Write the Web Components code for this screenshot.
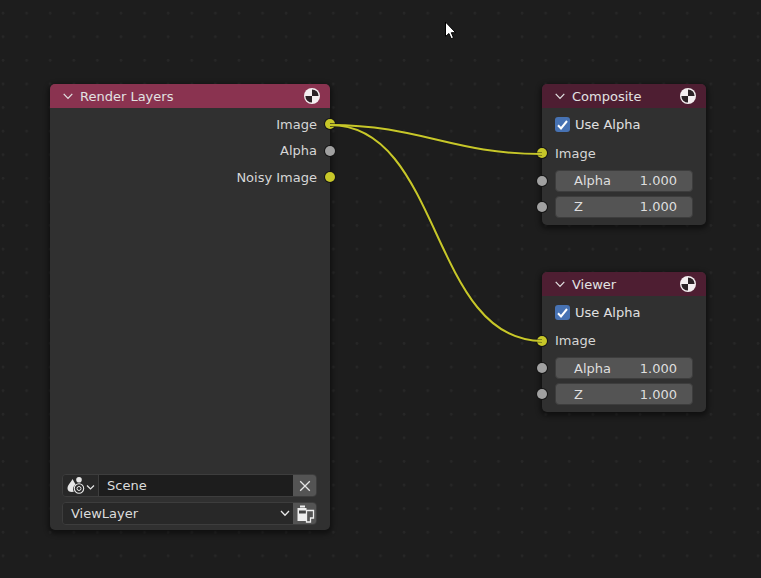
<!DOCTYPE html>
<html>
<head>
<meta charset="utf-8">
<title>Compositor nodes</title>
<style>
  html, body { margin: 0; height: 100%; background: #1d1d1d; }
</style>
</head>
<body>

<node-canvas>
  <node-frame title="Render Layers" color="#8a3350" style="left:50px;top:84px;width:280px;height:446px">
    <node-socket side="out" color="#c7c729" label="Image"></node-socket>
    <node-socket side="out" color="#a1a1a1" label="Alpha"></node-socket>
    <node-socket side="out" color="#c7c729" label="Noisy Image"></node-socket>
    <layer-picker slot="footer"></layer-picker>
  </node-frame>

  <node-frame title="Composite" color="#4e1e32" style="left:542px;top:84px;width:164px;height:141px">
    <node-check label="Use Alpha"></node-check>
    <node-socket side="in" color="#c7c729" label="Image" style="height:29px"></node-socket>
    <node-socket side="in" color="#a1a1a1" value-label="Alpha" value="1.000"></node-socket>
    <node-socket side="in" color="#a1a1a1" value-label="Z" value="1.000"></node-socket>
  </node-frame>

  <node-frame title="Viewer" color="#4e1e32" style="left:542px;top:272px;width:164px;height:140px">
    <node-check label="Use Alpha"></node-check>
    <node-socket side="in" color="#c7c729" label="Image" style="height:30px"></node-socket>
    <node-socket side="in" color="#a1a1a1" value-label="Alpha" value="1.000"></node-socket>
    <node-socket side="in" color="#a1a1a1" value-label="Z" value="1.000"></node-socket>
  </node-frame>
</node-canvas>

<script>
// preview sphere, same glyph in every node header
const PREVIEW_ICON = `
  <svg width="18" height="18" viewBox="0 0 18 18">
    <circle cx="9" cy="9" r="8" fill="#f4eef0"/>
    <path d="M9 9V2.4A6.6 6.6 0 0 1 15.6 9Z" fill="#2b2226"/>
    <path d="M9 9v6.6A6.6 6.6 0 0 1 2.4 9Z" fill="#2b2226"/>
  </svg>`;

class NodeCanvas extends HTMLElement {
  constructor() {
    super();
    this.attachShadow({ mode: 'open' });
    this.shadowRoot.innerHTML = `
      <style>
        :host {
          display: block;
          position: relative;
          width: 761px;
          height: 578px;
          overflow: hidden;
          background-color: #1d1d1d;
          background-image: radial-gradient(circle at 3px 13px, #272727 0, #272727 1.2px, transparent 1.7px);
          background-size: 23.6px 23.6px;
          font-family: "DejaVu Sans", sans-serif;
          font-size: 13px;
          color: #dcdcdc;
        }
        svg.wires { position: absolute; inset: 0; z-index: 2; pointer-events: none; }
        svg.cursor { position: absolute; left: 444px; top: 21px; z-index: 3; }
      </style>
      <slot></slot>
      <svg class="wires" width="761" height="578" fill="none">
        <path d="M330 125C420 125 452 154 542 154" stroke="#1a1a1a" stroke-opacity=".55" stroke-width="3.6"/>
        <path d="M330 125C442 125 430 341 542 341" stroke="#1a1a1a" stroke-opacity=".55" stroke-width="3.6"/>
        <path d="M330 125C420 125 452 154 542 154" stroke="#c7c729" stroke-width="2"/>
        <path d="M330 125C442 125 430 341 542 341" stroke="#c7c729" stroke-width="2"/>
      </svg>
      <svg class="cursor" width="14" height="20" viewBox="0 0 14 20">
        <path d="M1.5 1v14.5l3.4-3 2.3 5.2 2.3-1-2.2-5h4.4Z" fill="#fff" stroke="#000" stroke-width="1"/>
      </svg>`;
  }
}

class NodeFrame extends HTMLElement {
  constructor() {
    super();
    this.attachShadow({ mode: 'open' });
  }

  connectedCallback() {
    const color = this.getAttribute('color');
    this.shadowRoot.innerHTML = `
      <style>
        :host {
          position: absolute;
          display: flex;
          flex-direction: column;
          box-sizing: border-box;
          background: #303030;
          border-radius: 5px;
          box-shadow: 0 2px 5px 2px rgba(0, 0, 0, .45);
          z-index: 1;
        }
        .head {
          flex: none;
          height: 24px;
          display: flex;
          align-items: center;
          gap: 7px;
          padding: 0 9px 0 13px;
          background: ${color};
          border-radius: 5px 5px 0 0;
          color: #e2e2e2;
        }
        .head span { flex: 1; }
        .head svg { display: block; }
        .body {
          flex: 1;
          display: flex;
          flex-direction: column;
          padding-top: 3px;
          min-height: 0;
        }
        .foot { padding: 0 13px 5px 12px; }
      </style>
      <div class="head">
        <svg width="10" height="7" viewBox="0 0 10 7" fill="none" stroke="#e2e2e2" stroke-width="1.2"><path d="M.7.8 5 5.3 9.3.8"/></svg>
        <span>${this.getAttribute('title')}</span>
        ${PREVIEW_ICON}
      </div>
      <div class="body"><slot></slot></div>
      <div class="foot"><slot name="footer"></slot></div>`;
    this.removeAttribute('title');
  }
}

class NodeSocket extends HTMLElement {
  constructor() {
    super();
    this.attachShadow({ mode: 'open' });
  }

  connectedCallback() {
    const side = this.getAttribute('side');
    const field = this.getAttribute('value-label');
    const inner = field
      ? `<div class="field"><span>${field}</span><span>${this.getAttribute('value')}</span></div>`
      : `<span class="label">${this.getAttribute('label')}</span>`;
    this.shadowRoot.innerHTML = `
      <style>
        :host {
          display: flex;
          position: relative;
          align-items: center;
          box-sizing: border-box;
          height: 26.5px;
          padding: 0 13px;
          color: #d6d6d6;
          justify-content: ${side === 'out' ? 'flex-end' : 'flex-start'};
        }
        .dot {
          position: absolute;
          ${side === 'out' ? 'right' : 'left'}: -5px;
          top: 50%;
          width: 10px;
          height: 10px;
          margin-top: -5px;
          border-radius: 50%;
          background: ${this.getAttribute('color')};
          box-shadow: 0 0 0 1px #151515;
          z-index: 3;
        }
        .field {
          flex: 1;
          height: 22px;
          display: flex;
          align-items: center;
          justify-content: space-between;
          padding: 0 15px 0 18px;
          background: #545454;
          border: 1px solid #3d3d3d;
          border-radius: 4px;
          box-sizing: border-box;
          color: #dedede;
        }
      </style>
      ${inner}
      <span class="dot"></span>`;
  }
}

class NodeCheck extends HTMLElement {
  constructor() {
    super();
    this.attachShadow({ mode: 'open' });
  }

  connectedCallback() {
    this.shadowRoot.innerHTML = `
      <style>
        :host {
          display: flex;
          align-items: center;
          gap: 5px;
          height: 28px;
          padding: 0 13px;
          color: #e0e0e0;
        }
        .box {
          width: 15px;
          height: 15px;
          border-radius: 3px;
          background: #4772b3;
          display: flex;
          align-items: center;
          justify-content: center;
        }
      </style>
      <span class="box">
        <svg width="11" height="10" viewBox="0 0 11 10" fill="none" stroke="#fff" stroke-width="2"><path d="M1 5.2 4 8.4 10 1"/></svg>
      </span>
      <span>${this.getAttribute('label')}</span>`;
  }
}

class LayerPicker extends HTMLElement {
  constructor() {
    super();
    this.attachShadow({ mode: 'open' });
    this.shadowRoot.innerHTML = `
      <style>
        :host { display: flex; flex-direction: column; gap: 5px; color: #dcdcdc; }
        .row {
          display: flex;
          height: 23px;
          border: 1px solid #3d3d3d;
          border-radius: 4px;
          overflow: hidden;
          box-sizing: border-box;
        }
        .scope {
          width: 36px;
          flex: none;
          background: #282828;
          display: flex;
          align-items: center;
          justify-content: center;
          border-right: 1px solid #3d3d3d;
          box-sizing: border-box;
        }
        .name {
          flex: 1;
          background: #1d1d1d;
          display: flex;
          align-items: center;
          padding-left: 8px;
        }
        .btn {
          width: 23px;
          flex: none;
          background: #545454;
          display: flex;
          align-items: center;
          justify-content: center;
        }
        .drop {
          flex: 1;
          background: #282828;
          display: flex;
          align-items: center;
          justify-content: space-between;
          padding: 0 3px 0 8px;
        }
        svg { display: block; }
      </style>
      <div class="row">
        <div class="scope">
          <svg width="32" height="19" viewBox="0 0 32 19">
            <path d="M7.5 3C5.5 7 2.5 9 2.5 12.5 2.5 15 4.5 16 7 16c.8 0 1.5-.1 2-.4C8 14.500 7.800 13 8.300 11.500 8.800 10 9.800 9 10.700 8.500 9.500 6.500 8.500 5 7.500 3Z" fill="#e6e6e6"/>
            <circle cx="14" cy="3.800" r="2.800" fill="#e6e6e6"/>
            <circle cx="14" cy="12.500" r="4.700" fill="none" stroke="#e6e6e6" stroke-width="1.100"/>
            <circle cx="14" cy="12.500" r="2" fill="none" stroke="#e6e6e6" stroke-width="1"/>
            <path d="M22 9.500 25.500 13 29 9.500" fill="none" stroke="#e6e6e6" stroke-width="1.200"/>
          </svg>
        </div>
        <div class="name">Scene</div>
        <div class="btn">
          <svg width="12" height="12" viewBox="0 0 12 12" stroke="#e6e6e6" stroke-width="1.300"><path d="M1.200 1.200 10.800 10.800M10.800 1.200 1.200 10.800"/></svg>
        </div>
      </div>
      <div class="row">
        <div class="drop">
          <span>ViewLayer</span>
          <svg width="10" height="7" viewBox="0 0 10 7" fill="none" stroke="#e6e6e6" stroke-width="1.300"><path d="M1 1 5 5.200 9 1"/></svg>
        </div>
        <div class="btn">
          <svg width="20" height="20" viewBox="0 0 20 20">
            <path d="M5 1.500h5v2H5Z" fill="#eee"/>
            <path d="M2.500 4h9v13h-9Z" fill="#eee"/>
            <path d="M4 6.500h7v3H4Z" fill="#444"/>
            <path d="M11.500 6.500h7v7.500h-3v4h-4Z" fill="none" stroke="#eee" stroke-width="1.300"/>
          </svg>
        </div>
      </div>`;
  }
}

customElements.define('node-canvas', NodeCanvas);
customElements.define('node-frame', NodeFrame);
customElements.define('node-socket', NodeSocket);
customElements.define('node-check', NodeCheck);
customElements.define('layer-picker', LayerPicker);
</script>
</body>
</html>
